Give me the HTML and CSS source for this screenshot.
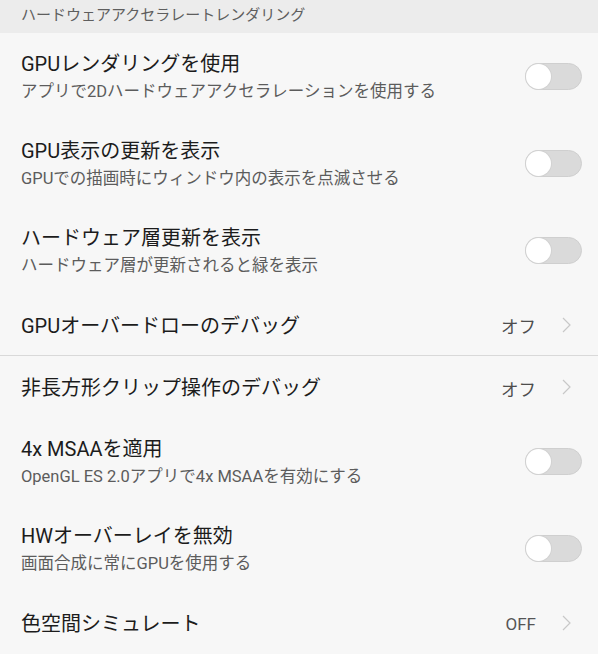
FILE: index.html
```html
<!DOCTYPE html>
<html lang="ja">
<head>
    <meta charset="UTF-8">
    <title>開発者向けオプション</title>
    <link rel="stylesheet" href="styles.css">
</head>
<body>
    <div class="section-head">ハードウェアアクセラレートレンダリング</div>

    <div class="row tall">
        <div class="text">
            <div class="title">GPUレンダリングを使用</div>
            <div class="sub">アプリで2Dハードウェアアクセラレーションを使用する</div>
        </div>
        <div class="switch"><span class="knob"></span></div>
    </div>

    <div class="row tall">
        <div class="text">
            <div class="title">GPU表示の更新を表示</div>
            <div class="sub">GPUでの描画時にウィンドウ内の表示を点滅させる</div>
        </div>
        <div class="switch"><span class="knob"></span></div>
    </div>

    <div class="row tall">
        <div class="text">
            <div class="title">ハードウェア層更新を表示</div>
            <div class="sub">ハードウェア層が更新されると緑を表示</div>
        </div>
        <div class="switch"><span class="knob"></span></div>
    </div>

    <div class="row short divider">
        <div class="text">
            <div class="title">GPUオーバードローのデバッグ</div>
        </div>
        <div class="value">オフ</div>
        <svg class="chevron" width="9" height="16" viewBox="0 0 9 16"><polyline points="1,1 8,8 1,15" fill="none" stroke="#c8c8c8" stroke-width="1.2"/></svg>
    </div>

    <div class="row short">
        <div class="text">
            <div class="title">非長方形クリップ操作のデバッグ</div>
        </div>
        <div class="value">オフ</div>
        <svg class="chevron" width="9" height="16" viewBox="0 0 9 16"><polyline points="1,1 8,8 1,15" fill="none" stroke="#c8c8c8" stroke-width="1.2"/></svg>
    </div>

    <div class="row tall">
        <div class="text">
            <div class="title">4x MSAAを適用</div>
            <div class="sub">OpenGL ES 2.0アプリで4x MSAAを有効にする</div>
        </div>
        <div class="switch"><span class="knob"></span></div>
    </div>

    <div class="row tall">
        <div class="text">
            <div class="title">HWオーバーレイを無効</div>
            <div class="sub">画面合成に常にGPUを使用する</div>
        </div>
        <div class="switch"><span class="knob"></span></div>
    </div>

    <div class="row short">
        <div class="text">
            <div class="title">色空間シミュレート</div>
        </div>
        <div class="value latin">OFF</div>
        <svg class="chevron" width="9" height="16" viewBox="0 0 9 16"><polyline points="1,1 8,8 1,15" fill="none" stroke="#c8c8c8" stroke-width="1.2"/></svg>
    </div>
</body>
</html>
```

FILE: styles.css
```css
body, html {
    margin: 0;
    padding: 0;
    background: #f7f7f7;
    font-family: Roboto, "Noto Sans CJK JP", sans-serif;
    overflow: hidden;
}
.section-head {
    height: 33px;
    line-height: 30px;
    padding-left: 21px;
    background: #ececec;
    color: #5e5e5e;
    font-size: 15px;
}
.row {
    display: flex;
    align-items: center;
    padding: 0 16px 0 21px;
    box-sizing: border-box;
}
.row.tall {
    height: 87px;
}
.row.short {
    height: 62px;
}
.divider {
    border-bottom: 1px solid #d9d9d9;
}
.text {
    flex: 1;
    padding-top: 2px;
}
.title {
    font-size: 20px;
    color: #1c1c1c;
    line-height: 26px;
}
.sub {
    font-size: 16.5px;
    color: #5c5c5c;
    line-height: 26px;
    margin-top: 2px;
}
.switch {
    position: relative;
    width: 57px;
    height: 27px;
    border-radius: 14px;
    background: #dadada;
    border: 1px solid #cfcfcf;
    box-sizing: border-box;
}
.knob {
    position: absolute;
    top: 0;
    left: 0;
    width: 25px;
    height: 25px;
    border-radius: 50%;
    background: #fff;
    box-shadow: 0 0 0 1px #d2d2d2;
}
.value {
    font-size: 17.5px;
    color: #4d4d4d;
    margin-right: 26px;
    padding-top: 2px;
}
.value.latin {
    font-size: 17px;
    color: #555;
}
.chevron {
    display: block;
    margin-right: 11px;
}
```
